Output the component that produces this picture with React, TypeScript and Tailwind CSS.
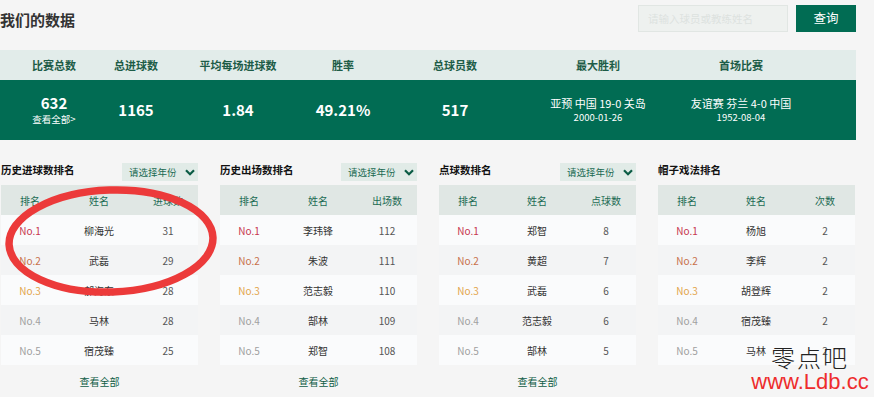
import React from 'react';

type Row = { name: string; value: string };
type Board = { title: string; valueLabel: string; rows: Row[]; hasYear: boolean; hasMore: boolean };

const stats = [
  { label: '比赛总数', w: 'w-[108px]' },
  { label: '总进球数', w: 'w-[56px]' },
  { label: '平均每场进球数', w: 'w-[148px]' },
  { label: '胜率', w: 'w-[62px]' },
  { label: '总球员数', w: 'w-[162px]' },
  { label: '最大胜利', w: 'w-[124px]' },
  { label: '首场比赛', w: 'w-[162px]' },
];

const boards: Board[] = [
  {
    title: '历史进球数排名',
    valueLabel: '进球数',
    hasYear: true,
    hasMore: true,
    rows: [
      { name: '柳海光', value: '31' },
      { name: '武磊', value: '29' },
      { name: '郝海东', value: '28' },
      { name: '马林', value: '28' },
      { name: '宿茂臻', value: '25' },
    ],
  },
  {
    title: '历史出场数排名',
    valueLabel: '出场数',
    hasYear: true,
    hasMore: true,
    rows: [
      { name: '李玮锋', value: '112' },
      { name: '朱波', value: '111' },
      { name: '范志毅', value: '110' },
      { name: '郜林', value: '109' },
      { name: '郑智', value: '108' },
    ],
  },
  {
    title: '点球数排名',
    valueLabel: '点球数',
    hasYear: true,
    hasMore: true,
    rows: [
      { name: '郑智', value: '8' },
      { name: '黄超', value: '7' },
      { name: '武磊', value: '6' },
      { name: '范志毅', value: '6' },
      { name: '郜林', value: '5' },
    ],
  },
  {
    title: '帽子戏法排名',
    valueLabel: '次数',
    hasYear: false,
    hasMore: false,
    rows: [
      { name: '杨旭', value: '2' },
      { name: '李辉', value: '2' },
      { name: '胡登辉', value: '2' },
      { name: '宿茂臻', value: '2' },
      { name: '马林', value: '2' },
    ],
  },
];

const rankColors = ['text-[#c7354f]', 'text-[#c8704c]', 'text-[#e3a54c]', 'text-[#a0a0a0]', 'text-[#a0a0a0]'];

const Chevron = () => (
  <svg width="10" height="7" viewBox="0 0 10 7" className="ml-[8px] shrink-0">
    <path d="M1 1.2 L5 5.2 L9 1.2" fill="none" stroke="#0b5c45" strokeWidth="2.2" />
  </svg>
);

const RankBoard: React.FC<{ board: Board }> = ({ board }) => (
  <div className="w-[197px]">
    <div className="flex justify-between h-[25px]">
      <h3 className="text-[10.5px] font-bold text-[#111] leading-[20px] whitespace-nowrap">{board.title}</h3>
      {board.hasYear && (
        <div className="mt-[3px] h-[18px] w-[76px] bg-[#e1ebe7] flex items-center pl-[7px] whitespace-nowrap text-[9.5px] text-[#1b6a52]">
          请选择年份
          <Chevron />
        </div>
      )}
    </div>
    <div className="grid grid-cols-[58px_80px_58px] h-[30px] items-center bg-[#e0e7e4] text-[10px] text-[#1c6b53] text-center">
      <span>排名</span>
      <span>姓名</span>
      <span>{board.valueLabel}</span>
    </div>
    {board.rows.map((r, i) => (
      <div
        key={i}
        className={`grid grid-cols-[58px_80px_58px] h-[30px] items-center text-[10px] text-center ${i % 2 === 0 ? 'bg-[#fafbfc]' : 'bg-[#f3f4f5]'}`}
      >
        <span className={rankColors[i]}>No.{i + 1}</span>
        <span className="text-[#333]">{r.name}</span>
        <span className="text-[#555]">{r.value}</span>
      </div>
    ))}
    {board.hasMore && (
      <div className="h-[32px] flex items-center justify-center text-[10px] text-[#0f5d45]">查看全部</div>
    )}
  </div>
);

export default function App() {
  return (
    <div
      className="relative w-[874px] h-[397px] overflow-hidden bg-[#f5f5f5]"
      style={{ fontFamily: '"Noto Sans CJK SC", "Noto Sans", sans-serif' }}
    >
      <div className="w-[856px]">
        {/* header */}
        <div className="flex items-start h-[50px]">
          <h1 className="mt-[10px] leading-[20px] text-[15px] font-bold text-[#333]">我们的数据</h1>
          <div className="ml-auto mt-[5px] h-[27px] w-[150px] bg-[#eef1ef] border border-[#e1e6e3] flex items-center pl-[9px] text-[10.5px] text-[#dde2df]">
            请输入球员或教练姓名
          </div>
          <button className="ml-[8px] mt-[5px] h-[27px] w-[60px] bg-[#016c53] text-white text-[12.5px]">查询</button>
        </div>

        {/* stats */}
        <div className="flex h-[30px] bg-[#e2ecea]">
          {stats.map((s) => (
            <div key={s.label} className={`${s.w} flex items-center justify-center whitespace-nowrap text-[11px] font-semibold text-[#1d5c47]`}>
              {s.label}
            </div>
          ))}
        </div>
        <div className="flex h-[60px] bg-[#016c53] text-white">
          <div className="w-[108px] flex flex-col items-center justify-center">
            <span className="text-[15px] font-bold leading-[18px]">632</span>
            <span className="text-[9.5px] leading-[13px] mt-[1px]">查看全部&gt;</span>
          </div>
          <div className="w-[56px] flex items-center justify-center text-[15px] font-bold">1165</div>
          <div className="w-[148px] flex items-center justify-center text-[15px] font-bold">1.84</div>
          <div className="w-[62px] flex items-center justify-center text-[15px] font-bold whitespace-nowrap">49.21%</div>
          <div className="w-[162px] flex items-center justify-center text-[15px] font-bold">517</div>
          <div className="w-[124px] flex flex-col items-center justify-center whitespace-nowrap">
            <span className="text-[11px] leading-[15px]">亚预 中国 19-0 关岛</span>
            <span className="text-[9.5px] leading-[13px]">2000-01-26</span>
          </div>
          <div className="w-[162px] flex flex-col items-center justify-center whitespace-nowrap">
            <span className="text-[11px] leading-[15px]">友谊赛 芬兰 4-0 中国</span>
            <span className="text-[9.5px] leading-[13px]">1952-08-04</span>
          </div>
        </div>

        {/* rankings */}
        <div className="mt-[20px] pl-[1px] flex gap-[22px]">
          {boards.map((b) => (
            <RankBoard key={b.title} board={b} />
          ))}
        </div>
      </div>

      {/* hand-drawn annotation */}
      <svg className="absolute left-0 top-0 pointer-events-none" width="874" height="397">
        <ellipse cx="111" cy="241" rx="102" ry="51" fill="none" stroke="#ec3a3a" strokeWidth="7.5" transform="rotate(-2 111 241)" />
      </svg>

      {/* watermark */}
      <div className="absolute left-[752px] top-[343px] w-[116px] flex flex-col items-center pointer-events-none">
        <span className="text-[24px] leading-[27px] text-[#222] tracking-[2px] font-light">零点吧</span>
        <span className="text-[22px] leading-[24px] text-[#ee2c2c]" style={{ fontFamily: '"Liberation Sans", sans-serif' }}>www.Ldb.cc</span>
      </div>
    </div>
  );
}
